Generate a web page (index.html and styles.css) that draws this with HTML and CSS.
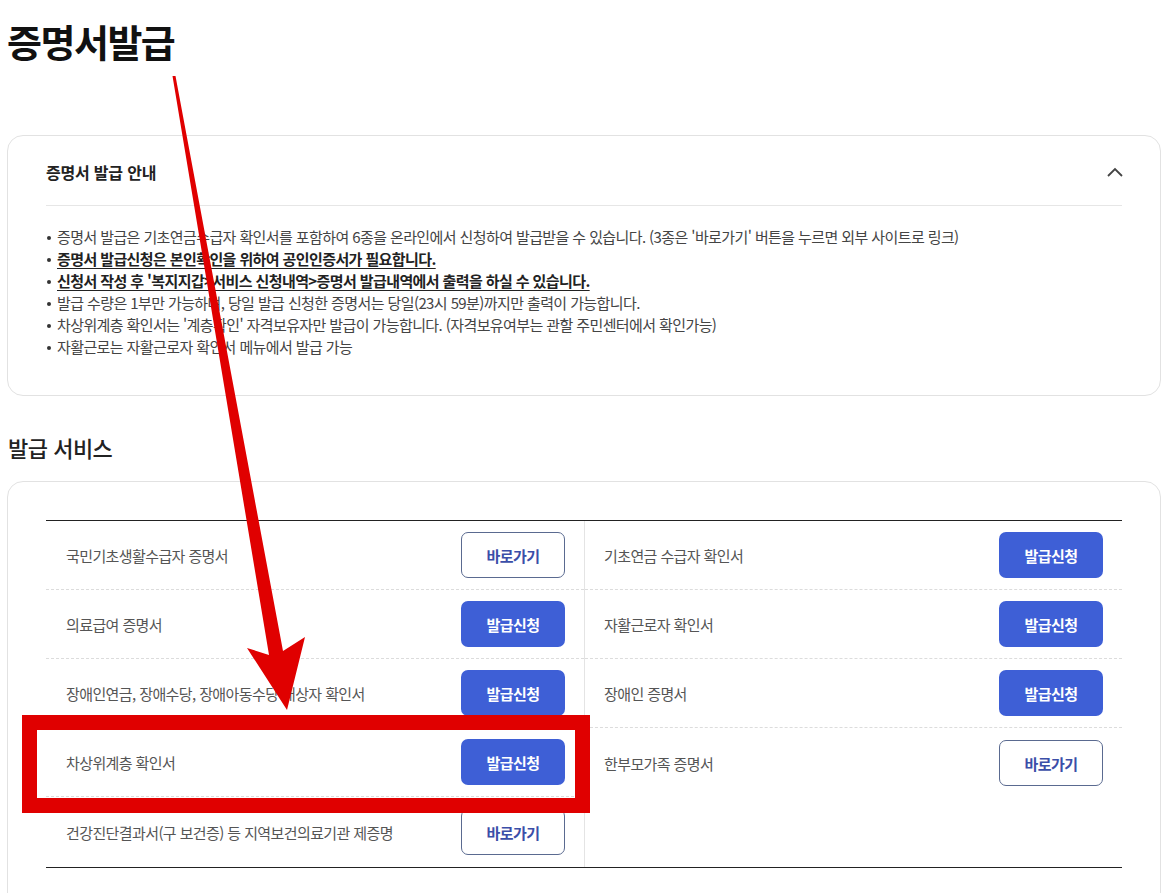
FILE: index.html
```html
<!DOCTYPE html>
<html lang="ko">
<head>
<meta charset="utf-8">
<title>증명서발급</title>
<link rel="stylesheet" href="styles.css">
</head>
<body>
<div class="page">
  <h1 class="title">증명서발급</h1>

  <section class="info-box">
    <div class="info-head">
      <h2 class="info-title">증명서 발급 안내</h2>
      <svg class="chevron" width="18" height="12" viewBox="0 0 18 12"><path d="M2 10 L9 3 L16 10" fill="none" stroke="#444" stroke-width="1.8"/></svg>
    </div>
    <ul class="info-list">
      <li>증명서 발급은 기초연금수급자 확인서를 포함하여 6종을 온라인에서 신청하여 발급받을 수 있습니다. (3종은 '바로가기' 버튼을 누르면 외부 사이트로 링크)</li>
      <li class="strong">증명서 발급신청은 본인확인을 위하여 공인인증서가 필요합니다.</li>
      <li class="strong">신청서 작성 후 '복지지갑&gt;서비스 신청내역&gt;증명서 발급내역에서 출력을 하실 수 있습니다.</li>
      <li>발급 수량은 1부만 가능하며, 당일 발급 신청한 증명서는 당일(23시 59분)까지만 출력이 가능합니다.</li>
      <li>차상위계층 확인서는 '계층확인' 자격보유자만 발급이 가능합니다. (자격보유여부는 관할 주민센터에서 확인가능)</li>
      <li>자활근로는 자활근로자 확인서 메뉴에서 발급 가능</li>
    </ul>
  </section>

  <h2 class="section-title">발급 서비스</h2>

  <section class="service-box">
    <div class="service-table">
      <div class="col col-left">
        <div class="row"><span class="name">국민기초생활수급자 증명서</span><a class="btn btn-outline">바로가기</a></div>
        <div class="row"><span class="name">의료급여 증명서</span><a class="btn btn-fill">발급신청</a></div>
        <div class="row"><span class="name">장애인연금, 장애수당, 장애아동수당 대상자 확인서</span><a class="btn btn-fill">발급신청</a></div>
        <div class="row"><span class="name">차상위계층 확인서</span><a class="btn btn-fill">발급신청</a></div>
        <div class="row last"><span class="name">건강진단결과서(구 보건증) 등 지역보건의료기관 제증명</span><a class="btn btn-outline">바로가기</a></div>
      </div>
      <div class="col col-right">
        <div class="row"><span class="name">기초연금 수급자 확인서</span><a class="btn btn-fill">발급신청</a></div>
        <div class="row"><span class="name">자활근로자 확인서</span><a class="btn btn-fill">발급신청</a></div>
        <div class="row"><span class="name">장애인 증명서</span><a class="btn btn-fill">발급신청</a></div>
        <div class="row last"><span class="name">한부모가족 증명서</span><a class="btn btn-outline">바로가기</a></div>
      </div>
    </div>
  </section>
</div>

<div class="highlight-box"></div>
<svg class="annot-arrow" width="1165" height="893" viewBox="0 0 1165 893">
  <polygon fill="#e00000" points="172.5,76 175.5,76 283,651 305,637 287,710 247,648 269,655"/>
</svg>
</body>
</html>
```

FILE: styles.css
```css
* { box-sizing: border-box; }
html, body { margin: 0; padding: 0; background: #fff; }
body {
  font-family: "Noto Sans CJK KR", "Noto Sans", sans-serif;
  color: #333;
  overflow: hidden;
  height: 893px;
  position: relative;
}
.page {
  padding: 0 4px 0 7px;
}
.title {
  margin: 0;
  padding: 15px 0 0 0;
  font-size: 38px;
  line-height: 52px;
  font-weight: 700;
  letter-spacing: -1.5px;
  color: #111;
}
.info-box {
  margin-top: 68px;
  border: 1px solid #e2e2e2;
  border-radius: 16px;
  padding: 0 38px 37px 38px;
}
.info-head {
  height: 70px;
  display: flex;
  align-items: center;
  justify-content: space-between;
  border-bottom: 1px solid #e6e6e6;
}
.info-title {
  margin: 0;
  font-size: 16px;
  font-weight: 700;
  color: #222;
  letter-spacing: -0.2px;
  padding-top: 2px;
}
.chevron { margin-right: -2px; margin-top: 2px; }
.info-list {
  list-style: none;
  margin: 20px 0 0 0;
  padding: 0;
  font-size: 15px;
  line-height: 22px;
  color: #444;
  letter-spacing: -0.6px;
}
.info-list li {
  position: relative;
  padding-left: 11px;
}
.info-list li::before {
  content: "";
  position: absolute;
  left: 1px;
  top: 10px;
  width: 4px;
  height: 4px;
  border-radius: 50%;
  background: #333;
}
.info-list li.strong {
  font-weight: 700;
  color: #222;
  text-decoration: underline;
  text-underline-offset: 3px;
}
.section-title {
  margin: 35px 0 0 1px;
  font-size: 22px;
  line-height: 32px;
  font-weight: 500;
  color: #222;
  letter-spacing: -0.5px;
}
.service-box {
  margin-top: 18px;
  border: 1px solid #e2e2e2;
  border-radius: 16px;
  padding: 38px 38px 60px 38px;
}
.service-table {
  display: grid;
  grid-template-columns: 539px 1fr;
  border-top: 1px solid #222;
  border-bottom: 1px solid #222;
}
.col-left { border-right: 1px solid #e4e4e4; }
.row {
  height: 69px;
  display: flex;
  align-items: center;
  justify-content: space-between;
  border-bottom: 1px dashed #dcdcdc;
  padding: 0 19px 0 20px;
}
.row.last { border-bottom: none; height: 70px; }
.col-right .row { padding: 0 19px 0 19px; }
.name {
  font-size: 15px;
  color: #555;
  letter-spacing: -0.6px;
}
.btn {
  width: 104px;
  height: 46px;
  border-radius: 7px;
  display: flex;
  align-items: center;
  justify-content: center;
  font-size: 15px;
  font-weight: 700;
  letter-spacing: -0.6px;
}
.btn-fill {
  background: #3e5fd6;
  color: #fff;
}
.btn-outline {
  background: #fff;
  border: 1px solid #5a6a90;
  color: #3b4ea8;
}
.highlight-box {
  position: absolute;
  left: 22px;
  top: 715px;
  width: 568px;
  height: 98px;
  border: 15px solid #e00000;
}
.annot-arrow {
  position: absolute;
  left: 0;
  top: 0;
  pointer-events: none;
}
```
